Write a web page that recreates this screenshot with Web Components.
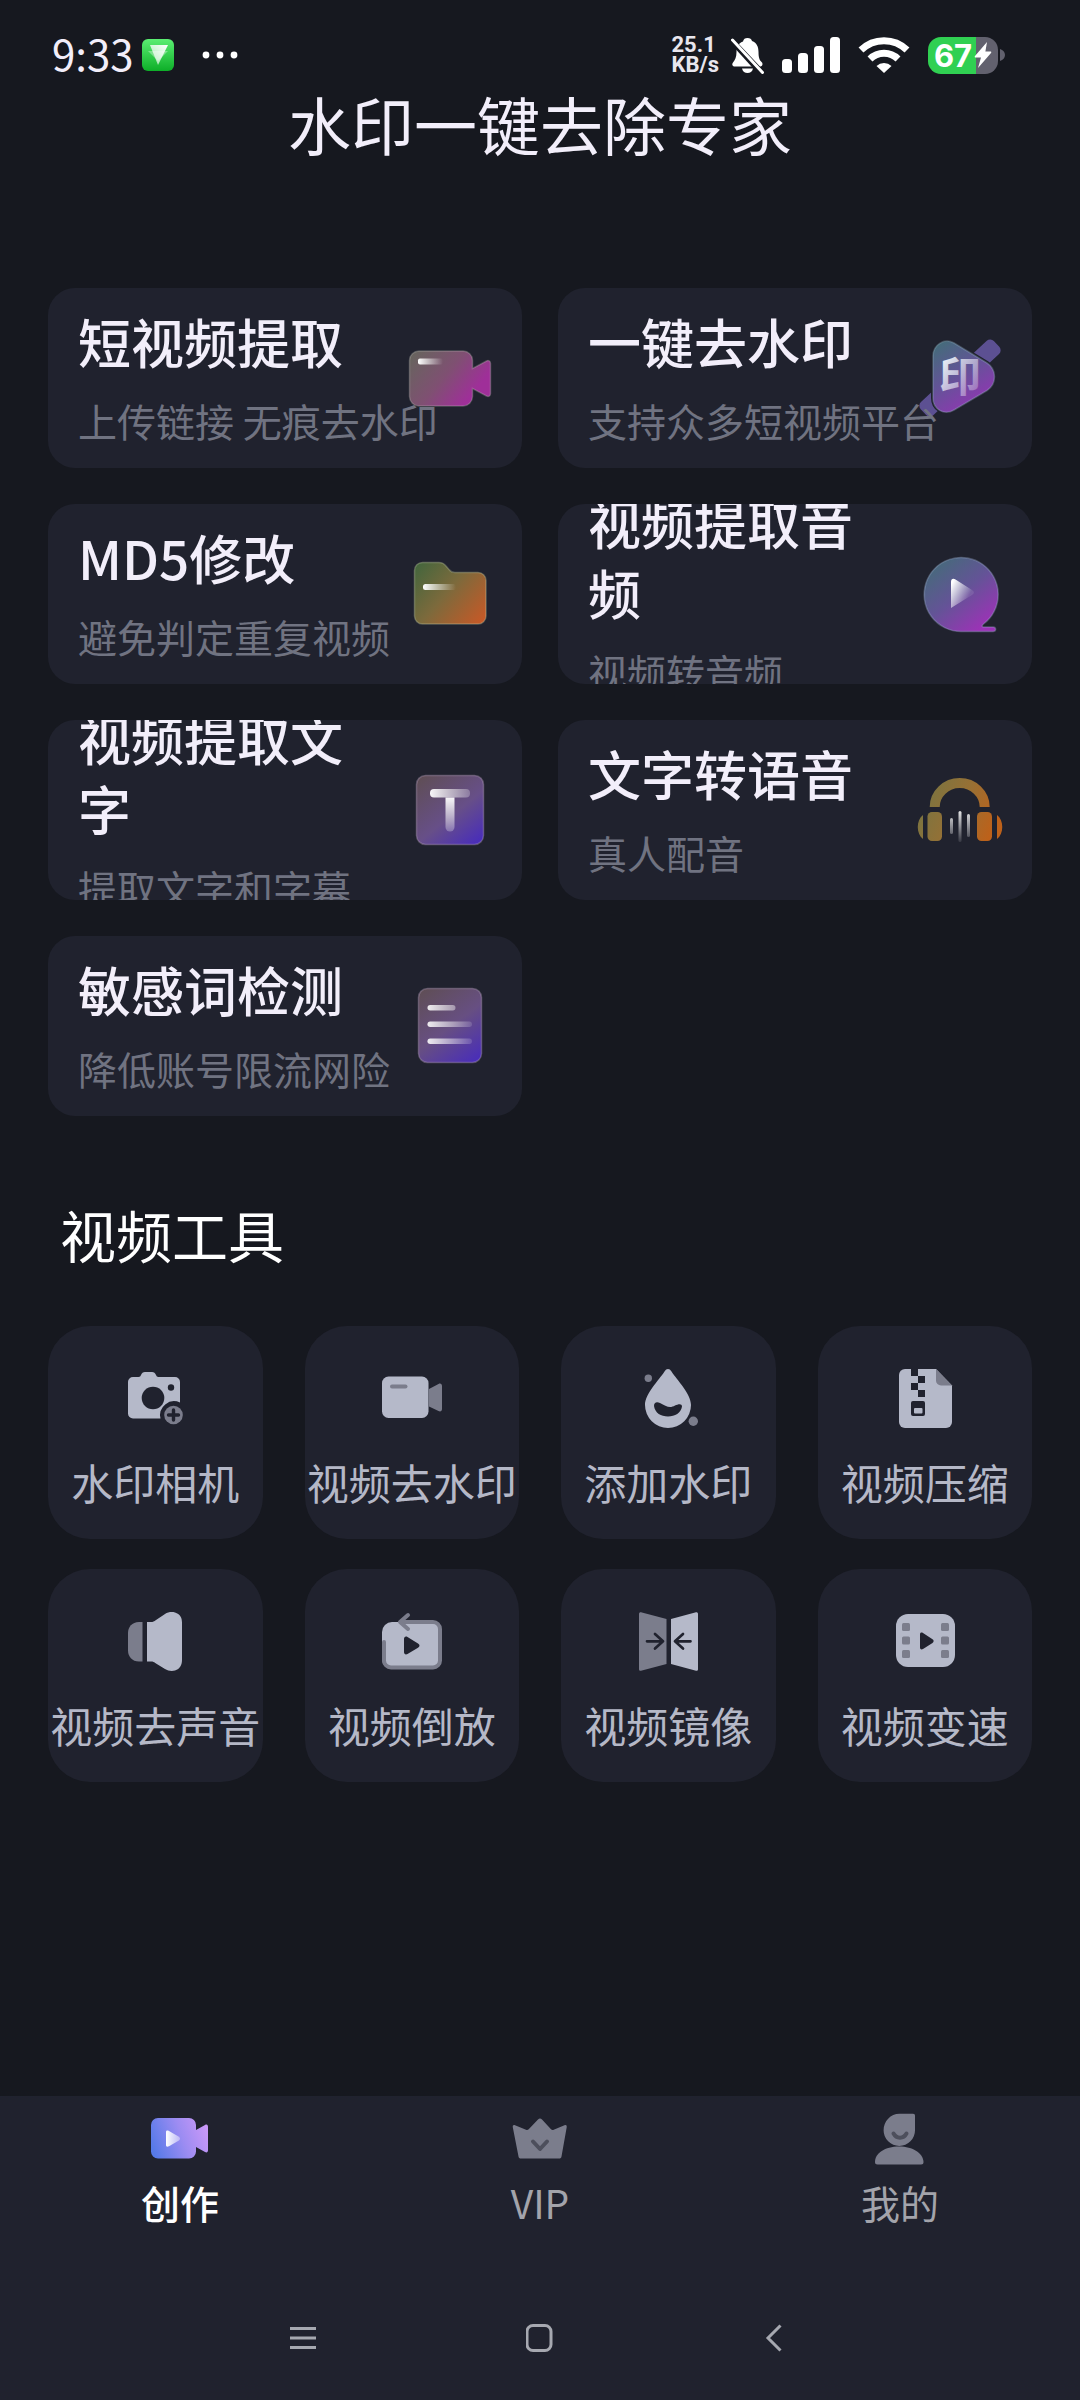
<!DOCTYPE html>
<html lang="zh-CN">
<head>
<meta charset="utf-8">
<meta name="viewport" content="width=device-width, initial-scale=1">
<title>水印一键去除专家</title>
<style>
  :root {
    --color-bg: #16181f;
    --color-surface: #20222e;
    --color-title: #f2eefa;
    --color-muted: #707381;
    --color-label: #b5b8c7;
    --color-icon: #b5b9c9;
    --color-icon-dim: #7b7d8c;
  }

  body {
    margin: 0;
    background: var(--color-bg);
    color: var(--color-title);
    font-family: "Noto Sans CJK SC", "Noto Sans", sans-serif;
  }
</style>
</head>
<body>
<app-shell>
  <status-bar slot="status" time="9:33" rate="25.1" unit="KB/s" battery="67"></status-bar>
  <h1 slot="title">水印一键去除专家</h1>

  <card-grid>
    <feature-card icon="clip">短视频提取<span slot="note">上传链接 无痕去水印</span></feature-card>
    <feature-card icon="stamp">一键去水印<span slot="note">支持众多短视频平台</span></feature-card>
    <feature-card icon="folder">MD5修改<span slot="note">避免判定重复视频</span></feature-card>
    <feature-card icon="disc">视频提取音频<span slot="note">视频转音频</span></feature-card>
    <feature-card icon="letter">视频提取文字<span slot="note">提取文字和字幕</span></feature-card>
    <feature-card icon="headphones">文字转语音<span slot="note">真人配音</span></feature-card>
    <feature-card icon="document">敏感词检测<span slot="note">降低账号限流网险</span></feature-card>
  </card-grid>

  <tool-section>
    <span slot="heading">视频工具</span>
    <tool-tile icon="camera">水印相机</tool-tile>
    <tool-tile icon="video">视频去水印</tool-tile>
    <tool-tile icon="drop">添加水印</tool-tile>
    <tool-tile icon="zip">视频压缩</tool-tile>
    <tool-tile icon="speaker">视频去声音</tool-tile>
    <tool-tile icon="reverse">视频倒放</tool-tile>
    <tool-tile icon="mirror">视频镜像</tool-tile>
    <tool-tile icon="film">视频变速</tool-tile>
  </tool-section>

  <tab-bar slot="footer">
    <tab-item icon="create" href="#create" active>创作</tab-item>
    <tab-item icon="crown" href="#vip">VIP</tab-item>
    <tab-item icon="person" href="#me">我的</tab-item>
  </tab-bar>
  <system-nav slot="footer"></system-nav>
</app-shell>

<script>
const ICONS = {
  // feature cards, 96 x 96
  clip: [96, `
    <linearGradient id="a" gradientUnits="userSpaceOnUse" x1="16" y1="20" x2="80" y2="72">
      <stop stop-color="#68635f"/><stop offset=".45" stop-color="#7f5072"/><stop offset=".85" stop-color="#9f2f99"/>
    </linearGradient>
    <linearGradient id="b"><stop stop-color="#fff"/><stop offset="1" stop-color="#fff" stop-opacity="0"/></linearGradient>
    <path d="M17 21h44a9.500 9.500 0 0 1 9.500 9.500v8l14-7.500c2-1 4 0 4 2.500v30c0 2.500-2 3.500-4 2.500l-14-7.500v8a9.500 9.500 0 0 1-9.500 9.500H17a9.500 9.500 0 0 1-9.500-9.500v-36A9.500 9.500 0 0 1 17 21z" fill="url(#a)" stroke="#c0c0b8" stroke-opacity=".3" stroke-width="1.500"/>
    <rect x="16" y="28.500" width="25" height="6" rx="2" fill="url(#b)"/>`],
  stamp: [96, `
    <linearGradient id="a" gradientUnits="userSpaceOnUse" x1="24" y1="16" x2="62" y2="74">
      <stop stop-color="#456b7b"/><stop offset=".5" stop-color="#625497"/><stop offset="1" stop-color="#8c39b0"/>
    </linearGradient>
    <linearGradient id="b" x1="0" y1="0" x2="1" y2="1"><stop offset=".2" stop-color="#e8ecf4"/><stop offset=".9" stop-color="#e8e0f4" stop-opacity=".25"/></linearGradient>
    <rect x="-2" y="39" width="100" height="18" rx="5" transform="rotate(-43 48 48)" fill="#5c5092"/>
    <path d="M21 26c0-11 11-18.500 21-13l33 20c10 6.500 10 21 0 27.500L42 80c-10 6-21-1-21-12z" fill="#20222e" stroke="#20222e" stroke-width="4"/>
    <path d="M21 26c0-11 11-18.500 21-13l33 20c10 6.500 10 21 0 27.500L42 80c-10 6-21-1-21-12z" fill="url(#a)" stroke="#9fc0d0" stroke-opacity=".3" stroke-width="1.500"/>
    <text x="48" y="62" text-anchor="middle" font-family="Noto Sans CJK SC, sans-serif" font-size="42" font-weight="700" fill="url(#b)">印</text>`],
  folder: [96, `
    <linearGradient id="a" gradientUnits="userSpaceOnUse" x1="16" y1="18" x2="84" y2="76">
      <stop stop-color="#45663d"/><stop offset=".45" stop-color="#7c6a3c"/><stop offset="1" stop-color="#ca5826"/>
    </linearGradient>
    <linearGradient id="b"><stop stop-color="#fff"/><stop offset="1" stop-color="#fff" stop-opacity="0"/></linearGradient>
    <path d="M12.500 24.500a8 8 0 0 1 8-8H37c3 0 5 1 7 3.500l3 3.500c2 2.500 3 3 6 3h23a8 8 0 0 1 8 8V70a8 8 0 0 1-8 8H20.500a8 8 0 0 1-8-8z" fill="url(#a)" stroke="#c0c8a0" stroke-opacity=".35" stroke-width="1.500"/>
    <rect x="21" y="38" width="33" height="6" rx="2.500" fill="url(#b)"/>`],
  disc: [96, `
    <linearGradient id="a" gradientUnits="userSpaceOnUse" x1="22" y1="18" x2="72" y2="80">
      <stop stop-color="#466a7b"/><stop offset=".5" stop-color="#645397"/><stop offset="1" stop-color="#9b33b6"/>
    </linearGradient>
    <linearGradient id="b" x1="0" y1="0" x2="1" y2=".7"><stop offset=".1" stop-color="#fff"/><stop offset=".8" stop-color="#fff" stop-opacity=".1"/></linearGradient>
    <path d="M49 85.500a37 37 0 1 1 22.500-7.500c-1.500 1.200-2 3 0 3H81c3.500 0 3.500 4.500 0 4.500z" fill="url(#a)" stroke="#9fb0d0" stroke-opacity=".35" stroke-width="1.500"/>
    <path d="M39 36c0-3 2-4 4.500-2.500L60 44c2.500 1.500 2.500 3.500 0 5L39 62z" fill="url(#b)"/>`],
  letter: [96, `
    <linearGradient id="a" gradientUnits="userSpaceOnUse" x1="20" y1="14" x2="76" y2="84">
      <stop stop-color="#5f4e56"/><stop offset=".55" stop-color="#674f88"/><stop offset="1" stop-color="#472bbd"/>
    </linearGradient>
    <linearGradient id="b"><stop stop-color="#fff" stop-opacity=".95"/><stop offset="1" stop-color="#fff" stop-opacity=".25"/></linearGradient>
    <linearGradient id="c" x2="0" y2="1"><stop stop-color="#fff" stop-opacity=".95"/><stop offset="1" stop-color="#fff" stop-opacity=".25"/></linearGradient>
    <rect x="14.500" y="13.500" width="67" height="69" rx="9" fill="url(#a)" stroke="#c0a8c8" stroke-opacity=".35" stroke-width="1.500"/>
    <rect x="28" y="27" width="40" height="8.500" rx="4" fill="url(#b)"/>
    <path d="M43.500 35.500h9V65a4.500 4.500 0 0 1-9 0z" fill="url(#c)"/>`],
  headphones: [96, `
    <linearGradient id="a" gradientUnits="userSpaceOnUse" x1="14" y1="34" x2="82" y2="64">
      <stop stop-color="#7c7440"/><stop offset=".5" stop-color="#987034"/><stop offset="1" stop-color="#bd611a"/>
    </linearGradient>
    <linearGradient id="b" gradientUnits="userSpaceOnUse" x1="0" y1="50" x2="0" y2="80"><stop stop-color="#fff" stop-opacity=".85"/><stop offset="1" stop-color="#fff" stop-opacity=".1"/></linearGradient>
    <path d="M22.700 45a25 24 0 0 1 50 0" fill="none" stroke="url(#a)" stroke-width="10"/>
    <g fill="url(#a)">
      <rect x="15.500" y="50" width="14.500" height="29" rx="4.500"/>
      <rect x="65" y="50" width="15" height="29" rx="4.500"/>
      <path d="M11 53v24c-7-5-7-19 0-24zM85 53v24c7-5 7-19 0-24z"/>
    </g>
    <g fill="url(#b)">
      <rect x="38" y="56" width="3" height="16" rx="1.500"/>
      <rect x="46.500" y="49" width="3" height="31" rx="1.500"/>
      <rect x="55" y="52" width="3" height="23" rx="1.500"/>
    </g>`],
  document: [96, `
    <linearGradient id="a" gradientUnits="userSpaceOnUse" x1="20" y1="12" x2="76" y2="86">
      <stop stop-color="#5f4e56"/><stop offset=".5" stop-color="#674f82"/><stop offset="1" stop-color="#472bbd"/>
    </linearGradient>
    <linearGradient id="b" gradientUnits="userSpaceOnUse" x1="25" y1="0" x2="72" y2="0"><stop stop-color="#fff" stop-opacity=".9"/><stop offset="1" stop-color="#fff" stop-opacity=".1"/></linearGradient>
    <rect x="16.500" y="10.500" width="63" height="74" rx="9" fill="url(#a)" stroke="#c0a8c8" stroke-opacity=".35" stroke-width="1.500"/>
    <g fill="url(#b)">
      <rect x="25.500" y="27" width="28" height="5.500" rx="2.700"/>
      <rect x="25.500" y="43.500" width="44.500" height="5.500" rx="2.700"/>
      <rect x="25.500" y="60.500" width="44.500" height="5.500" rx="2.700"/>
    </g>`],

  // tool tiles, 60 x 60
  camera: [60, `
    <path d="M8 9h5.500c1.500 0 2-1 2.500-2 .8-2 2-3 4-3h7c2 0 3.200 1 4 3 .5 1 1 2 2.500 2H50a5 5 0 0 1 5 5v20.500A14 14 0 0 0 35.500 50.500H8a5 5 0 0 1-5-5V14a5 5 0 0 1 5-5z" fill="var(--color-icon)"/>
    <circle cx="28" cy="30" r="11.300" fill="var(--color-surface)"/>
    <circle cx="46" cy="19.500" r="3.200" fill="var(--color-surface)"/>
    <circle cx="48.500" cy="47" r="9.300" fill="var(--color-icon-dim)"/>
    <path d="M48.500 42v10M43.500 47h10" stroke="var(--color-surface)" stroke-width="3.400" stroke-linecap="round"/>`],
  video: [60, `
    <rect y="8.500" width="46.500" height="41.500" rx="6.500" fill="var(--color-icon)"/>
    <rect x="8" y="16.500" width="17.500" height="4" rx="2" fill="var(--color-icon-dim)"/>
    <path d="M47 21l9.500-5c2-1 3.500 0 3.500 2v23c0 2-1.500 3-3.500 2L47 38.500z" fill="var(--color-icon-dim)"/>`],
  drop: [60, `
    <path d="M26.500 3.500c2-3.300 5-3.300 7 0C39 12 53 26 53 37a23 23 0 0 1-46 0C7 26 21 12 26.500 3.500z" fill="var(--color-icon)"/>
    <path d="M16 38c0-4 3-4.500 6-3 6 3.500 10 5.500 15 2.500 3-1.500 7-2.500 7 1C43 45 37 48.500 30 48.500S17 45 16 38z" fill="var(--color-surface)"/>
    <circle cx="10.300" cy="10.300" r="3.700" fill="var(--color-icon-dim)"/>
    <circle cx="55.300" cy="53.300" r="4.700" fill="var(--color-icon-dim)"/>`],
  zip: [60, `
    <path d="M10 1h31l16 16.500V54a6 6 0 0 1-6 6H10a6 6 0 0 1-6-6V7a6 6 0 0 1 6-6z" fill="var(--color-icon)"/>
    <path d="M41 1l16 16.500H46a5 5 0 0 1-5-5z" fill="var(--color-icon-dim)"/>
    <g fill="var(--color-surface)">
      <path d="M16 1h7v7h-7zM23 8h7v7h-7zM16 15h7v7h-7zM23 22h7v7h-7z"/>
      <rect x="16" y="33" width="14" height="15" rx="2"/>
    </g>
    <rect x="19" y="40" width="8.500" height="5.500" rx="1" fill="var(--color-icon)"/>`],
  speaker: [60, `
    <path d="M17.500 11v39.500H14c-7 0-11-5-11-11V22c0-6 4-11 11-11z" fill="var(--color-icon-dim)"/>
    <path d="M22 11h4c2 0 3-.5 5-2l9-6c3-2 7-2.500 10-1.500 5 1.500 7 5 7 10V49c0 5-2 9-7 10.500-3 1-7 .5-10-1.500l-9-5.500c-2-1.500-3-2-5-2h-4z" fill="var(--color-icon)"/>`],
  reverse: [60, `
    <rect y="11" width="59" height="47" rx="10" fill="var(--color-icon)"/>
    <path d="M19 11h32a7 7 0 0 1 7 7v31.500a7 7 0 0 1-7 7H9a7 7 0 0 1-7-7V31" fill="none" stroke="var(--color-icon-dim)" stroke-width="4" stroke-linecap="round"/>
    <path d="M26 4l-8 7 8 7" fill="none" stroke="var(--color-icon-dim)" stroke-width="4" stroke-linecap="round" stroke-linejoin="round"/>
    <path d="M22 28c0-2 1.500-3 3.500-2L36 32.500c2 1.200 2 3 0 4.200L25.500 43c-2 1-3.500 0-3.500-2z" fill="var(--color-surface)"/>`],
  mirror: [60, `
    <path d="M3 1.300L28.500 8v45L3 59.800c-1 .2-2-.4-2-1.500V2.800c0-1 1-1.700 2-1.500z" fill="var(--color-icon-dim)"/>
    <path d="M58 1.300L33 8v45l25 6.800c1 .2 2-.4 2-1.500V2.800c0-1-1-1.700-2-1.500z" fill="var(--color-icon)"/>
    <path d="M9 30.300h16M17 23l8 7.300-8 7.300M52.500 30.300H37M45 23l-8 7.300 8 7.300" fill="none" stroke="var(--color-surface)" stroke-width="2.700" stroke-linecap="round" stroke-linejoin="round"/>`],
  film: [60, `
    <rect x="1" y="3" width="59" height="53" rx="12" fill="var(--color-icon)"/>
    <g fill="var(--color-icon-dim)">
      <rect x="7" y="12" width="8" height="8" rx="1.500"/><rect x="7" y="25.500" width="8" height="8" rx="1.500"/><rect x="7" y="39" width="8" height="8" rx="1.500"/>
      <rect x="46" y="12" width="8" height="8" rx="1.500"/><rect x="46" y="25.500" width="8" height="8" rx="1.500"/><rect x="46" y="39" width="8" height="8" rx="1.500"/>
    </g>
    <path d="M25 23.500c0-2 1.500-2.500 3-1.500l9.500 6.300c1.500 1 1.500 2.600 0 3.600L28 38c-1.500 1-3 .3-3-1.500z" fill="var(--color-surface)"/>`],

  // tab bar, 66 x 66
  create: [66, `
    <linearGradient id="a" gradientUnits="userSpaceOnUse" x1="6" y1="44" x2="60" y2="24">
      <stop stop-color="#567ae8"/><stop offset=".55" stop-color="#9c8cf2"/><stop offset="1" stop-color="#c998f8"/>
    </linearGradient>
    <linearGradient id="b"><stop stop-color="#fff"/><stop offset="1" stop-color="#fff" stop-opacity=".4"/></linearGradient>
    <path d="M11 12h31a7 7 0 0 1 7 7v5l9-5c2-1 3 0 3 2v23c0 2-1 3-3 2l-9-5v4.500a7 7 0 0 1-7 7H11a7 7 0 0 1-7-7V19a7 7 0 0 1 7-7z" fill="url(#a)"/>
    <path d="M19 26.500c0-2 1-2.500 3-1.500l9.500 5.500c2 1.200 2 3 0 4.200L22 40.200c-2 1-3 .5-3-1.500z" fill="url(#b)"/>`],
  crown: [66, `
    <path d="M8 19.300l11 4.500c1 .4 2 .2 2.700-.5L31 13.500c1.300-1.500 2.700-1.500 4 0l9 9.800c.7.700 1.700.9 2.700.5l10.800-4.500c1.600-.6 2.500.3 2.200 2l-5.200 29.200c-.3 1.500-1 2-2.500 2H14c-1.500 0-2.200-.5-2.500-2L5.800 21.300c-.3-1.700.6-2.600 2.200-2z" fill="var(--color-icon-dim)"/>
    <path d="M26 35.500l7 7.500 7-7.500" fill="none" stroke="#4d4f5c" stroke-width="4" stroke-linecap="round" stroke-linejoin="round"/>`],
  person: [66, `
    <path d="M32.500 7.700H46c1.500 0 2 .7 2 2v14.500a15.700 15.700 0 0 1-31.400 0c0-9 7-16.500 15.900-16.500z" fill="var(--color-icon-dim)"/>
    <path d="M26.500 27.500c3 5.500 10 5.500 13 0" fill="none" stroke="#4d4f5c" stroke-width="4" stroke-linecap="round"/>
    <path d="M8 56C8 47 18 40.500 32 40.500S56 47 56.500 56c0 1.700-.7 2.500-2.500 2.500H10.500c-1.700 0-2.500-.8-2.500-2.500z" fill="var(--color-icon-dim)"/>`],
};

class AppIcon extends HTMLElement {
  constructor() {
    super();
    this.attachShadow({ mode: 'open' });
  }

  connectedCallback() {
    const [size, shapes] = ICONS[this.getAttribute('name')];
    this.shadowRoot.innerHTML = `
      <style>
        :host { display: block; flex: none; width: ${size}px; height: ${size}px; }
        svg { display: block; width: 100%; height: 100%; }
      </style>
      <svg viewBox="0 0 ${size} ${size}" aria-hidden="true">${shapes}</svg>
    `;
  }
}

class AppShell extends HTMLElement {
  constructor() {
    super();
    this.attachShadow({ mode: 'open' });
    this.shadowRoot.innerHTML = `
      <style>
        :host {
          display: flex;
          flex-direction: column;
          min-height: 100vh;
        }

        ::slotted(h1) {
          margin: 0;
          text-align: center;
          font-size: 63px;
          font-weight: 400;
          line-height: 82px;
        }

        main {
          flex: 1;
          padding: 124px 48px 48px;
        }

        footer {
          background: var(--color-surface);
        }
      </style>
      <slot name="status"></slot>
      <slot name="title"></slot>
      <main><slot></slot></main>
      <footer><slot name="footer"></slot></footer>
    `;
  }
}

class StatusBar extends HTMLElement {
  constructor() {
    super();
    this.attachShadow({ mode: 'open' });
  }

  connectedCallback() {
    this.shadowRoot.innerHTML = `
      <style>
        :host {
          display: flex;
          align-items: center;
          justify-content: space-between;
          height: 54px;
          padding: 28px 75px 0 52px;
        }

        .side, .group {
          display: flex;
          align-items: center;
        }

        .left { gap: 8px; }
        .right { gap: 18px; color: #fff; }
        .group { gap: 12px; }
        svg { display: block; flex: none; }
        .time { padding-bottom: 4px; font-size: 42px; line-height: 50px; }
        .dots { margin-left: 20px; }

        .speed {
          font: 700 22px/20px Roboto, sans-serif;
          color: #e8e6ee;
        }

        .battery {
          display: flex;
          align-items: center;
          gap: 2px;
        }

        .level {
          display: flex;
          align-items: center;
          justify-content: center;
          gap: 2px;
          width: 70px;
          height: 37px;
          border-radius: 13px;
          background: linear-gradient(90deg, #30d052 68%, #62616e 68%);
          font: 700 31px/37px Inter, sans-serif;
        }
      </style>
      <div class="side left">
        <span class="time">${this.getAttribute('time')}</span>
        <svg width="32" height="32" viewBox="0 0 32 32">
          <linearGradient id="g" x2="0" y2="1"><stop stop-color="#5bee72"/><stop offset="1" stop-color="#0dae28"/></linearGradient>
          <linearGradient id="w" x1="1" x2="0" y2="1"><stop stop-color="#fff"/><stop offset="1" stop-color="#fff" stop-opacity=".5"/></linearGradient>
          <rect width="32" height="32" rx="6" fill="url(#g)"/>
          <path d="M6 12h20L16 22z" fill="#fff" opacity=".35"/>
          <path d="M8 6h18l-10 20z" fill="url(#w)"/>
        </svg>
        <svg class="dots" width="36" height="8" viewBox="0 0 36 8" fill="#fff">
          <circle cx="4" cy="4" r="3.400"/><circle cx="18" cy="4" r="3.400"/><circle cx="32" cy="4" r="3.400"/>
        </svg>
      </div>
      <div class="side right">
        <div class="group">
          <div class="speed">${this.getAttribute('rate')}<br>${this.getAttribute('unit')}</div>
          <svg width="33" height="37" viewBox="0 0 33 37" fill="#fff">
            <path d="M12 4.500C12.500 2 14 1 16.500 1S20.500 2 21 4c5 2 6.500 6 6.500 11 0 6 1 8 3.500 10.500 1 1.500.5 4-2 4H4c-2.500 0-3.500-2-2-4C4 23 5.500 20 5.500 15 5.500 10 7 6.500 12 4.500z"/>
            <path d="M11 31.500h11c-1 6-10 6-11 0z"/>
            <path d="M-1.500 2.500L30 37" stroke="#16181f" stroke-width="4"/>
            <path d="M1.500 2.500L32 35" stroke="#16181f" stroke-width="3"/>
            <path d="M1.500 3L31.500 35.500" stroke="#fff" stroke-width="3" stroke-linecap="round"/>
          </svg>
        </div>
        <svg width="58" height="36" viewBox="0 0 58 36" fill="#fff">
          <rect y="22" width="10" height="14" rx="3.500"/><rect x="16" y="16" width="10" height="20" rx="3.500"/>
          <rect x="32" y="9" width="10" height="27" rx="3.500"/><rect x="48" width="10" height="36" rx="3.500"/>
        </svg>
        <svg width="52" height="36" viewBox="0 0 52 36">
          <path d="M3 13a33 33 0 0 1 46 0" fill="none" stroke="#fff" stroke-width="7"/>
          <path d="M12 22a20 20 0 0 1 28 0" fill="none" stroke="#fff" stroke-width="7"/>
          <path d="M18.500 29a11 11 0 0 1 15 0L26 36z" fill="#fff"/>
        </svg>
        <div class="battery">
          <div class="level">
            <span>${this.getAttribute('battery')}</span>
            <svg width="18" height="26" viewBox="0 0 18 26"><path d="M13 0L1 14c-.6.800-.3 1.500.6 1.500h5.400L4 26 17 11c.6-.8.300-1.500-.6-1.500h-5z" fill="#fff"/></svg>
          </div>
          <svg width="5" height="12" viewBox="0 0 5 12"><path d="M0 0c3 1 5 3 5 6s-2 5-5 6z" fill="#62616e"/></svg>
        </div>
      </div>
    `;
  }
}

class CardGrid extends HTMLElement {
  constructor() {
    super();
    this.attachShadow({ mode: 'open' });
    this.shadowRoot.innerHTML = `
      <style>
        :host {
          display: grid;
          grid-template-columns: repeat(2, minmax(0, 1fr));
          gap: 36px;
        }
      </style>
      <slot></slot>
    `;
  }
}

class FeatureCard extends HTMLElement {
  constructor() {
    super();
    this.attachShadow({ mode: 'open' });
  }

  connectedCallback() {
    this.shadowRoot.innerHTML = `
      <style>
        :host { display: block; }

        button {
          display: flex;
          align-items: center;
          gap: 24px;
          width: 100%;
          height: 180px;
          padding: 0 24px 0 30px;
          border: 0;
          border-radius: 27px;
          overflow: hidden;
          background: var(--color-surface);
          color: var(--color-title);
          font: inherit;
          text-align: left;
        }

        /* long notes run over the icon */
        .text {
          position: relative;
          z-index: 1;
          flex: 1;
          min-width: 0;
          padding-bottom: 4px;
        }

        .name {
          display: block;
          font-size: 53px;
          font-weight: 500;
          line-height: 70px;
        }

        .note {
          display: block;
          margin-top: 18px;
          color: var(--color-muted);
          font-size: 39px;
          line-height: 52px;
          white-space: nowrap;
        }
      </style>
      <button type="button">
        <span class="text">
          <span class="name"><slot></slot></span>
          <span class="note"><slot name="note"></slot></span>
        </span>
        <app-icon name="${this.getAttribute('icon')}"></app-icon>
      </button>
    `;
  }
}

class ToolSection extends HTMLElement {
  constructor() {
    super();
    this.attachShadow({ mode: 'open' });
    this.shadowRoot.innerHTML = `
      <style>
        :host { display: block; margin-top: 80px; }

        h2 {
          margin: 0 0 54px;
          padding-left: 12px;
          color: #fff;
          font-size: 56px;
          font-weight: 400;
          line-height: 76px;
        }

        .tools {
          display: grid;
          grid-template-columns: repeat(4, minmax(0, 1fr));
          gap: 30px 42px;
        }
      </style>
      <h2><slot name="heading"></slot></h2>
      <div class="tools"><slot></slot></div>
    `;
  }
}

class ToolTile extends HTMLElement {
  constructor() {
    super();
    this.attachShadow({ mode: 'open' });
  }

  connectedCallback() {
    this.shadowRoot.innerHTML = `
      <style>
        :host { display: block; }

        button {
          display: flex;
          flex-direction: column;
          align-items: center;
          gap: 24px;
          width: 100%;
          padding: 42px 0 27px;
          border: 0;
          border-radius: 42px;
          background: var(--color-surface);
          color: var(--color-label);
          font: inherit;
          font-size: 42px;
          line-height: 60px;
          white-space: nowrap;
        }
      </style>
      <button type="button">
        <app-icon name="${this.getAttribute('icon')}"></app-icon>
        <span><slot></slot></span>
      </button>
    `;
  }
}

class TabBar extends HTMLElement {
  constructor() {
    super();
    this.attachShadow({ mode: 'open' });
    this.shadowRoot.innerHTML = `
      <style>
        :host { display: block; }
        nav { display: grid; grid-template-columns: repeat(3, 1fr); }
      </style>
      <nav><slot></slot></nav>
    `;
  }
}

class TabItem extends HTMLElement {
  constructor() {
    super();
    this.attachShadow({ mode: 'open' });
  }

  connectedCallback() {
    this.shadowRoot.innerHTML = `
      <style>
        :host { display: block; color: #a3a4ab; }
        :host([active]) { color: #fff; font-weight: 500; }

        a {
          display: flex;
          flex-direction: column;
          align-items: center;
          gap: 6px;
          padding: 10px 0 50px;
          color: inherit;
          font-size: 39px;
          line-height: 48px;
          text-decoration: none;
        }
      </style>
      <a href="${this.getAttribute('href')}">
        <app-icon name="${this.getAttribute('icon')}"></app-icon>
        <span><slot></slot></span>
      </a>
    `;
  }
}

class SystemNav extends HTMLElement {
  constructor() {
    super();
    this.attachShadow({ mode: 'open' });
    this.shadowRoot.innerHTML = `
      <style>
        :host {
          display: flex;
          justify-content: center;
          align-items: center;
          gap: 176px;
          height: 124px;
        }

        button {
          display: grid;
          place-items: center;
          width: 60px;
          height: 60px;
          padding: 0;
          border: 0;
          background: none;
        }

        svg { display: block; fill: none; stroke: #a6a8b0; stroke-width: 3; }
      </style>
      <button type="button" aria-label="菜单"><svg width="28" height="28" viewBox="0 0 28 28"><path d="M0 4.500h26M0 14h26M0 23.500h26"/></svg></button>
      <button type="button" aria-label="主页"><svg width="28" height="28" viewBox="0 0 28 28"><rect x="1" y="1.500" width="24" height="25" rx="6"/></svg></button>
      <button type="button" aria-label="返回"><svg width="28" height="28" viewBox="0 0 28 28"><path d="M18.500 1.500L6 14l12.500 12.500"/></svg></button>
    `;
  }
}

customElements.define('app-icon', AppIcon);
customElements.define('app-shell', AppShell);
customElements.define('status-bar', StatusBar);
customElements.define('card-grid', CardGrid);
customElements.define('feature-card', FeatureCard);
customElements.define('tool-section', ToolSection);
customElements.define('tool-tile', ToolTile);
customElements.define('tab-bar', TabBar);
customElements.define('tab-item', TabItem);
customElements.define('system-nav', SystemNav);
</script>
</body>
</html>
